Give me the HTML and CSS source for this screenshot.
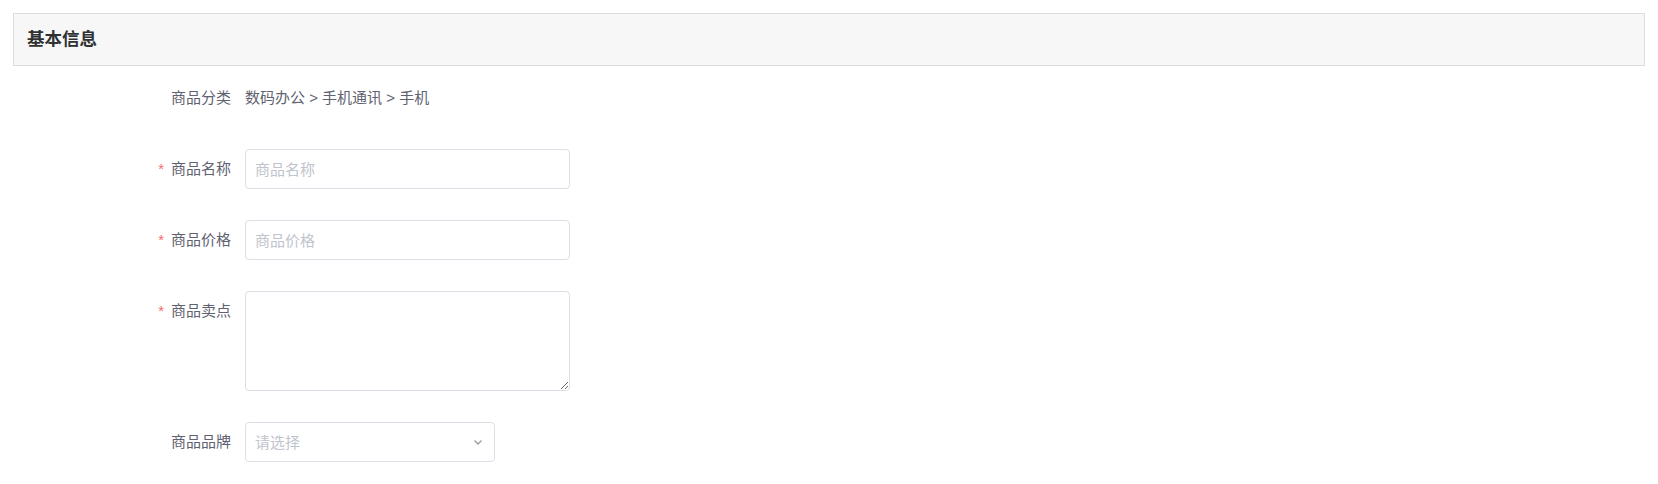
FILE: index.html
```html
<!DOCTYPE html>
<html>
<head>
    <meta charset="utf-8">
    <title>商品信息</title>
    <link rel="stylesheet" href="styles.css">
</head>
<body>
<div class="page">
    <div class="section-title">基本信息</div>

    <form class="goods-form">
        <div class="form-item">
            <label class="form-label">商品分类</label>
            <div class="form-content">
                <span class="form-text">数码办公 &gt; 手机通讯 &gt; 手机</span>
            </div>
        </div>
        <div class="form-item">
            <label class="form-label is-required" for="goods-name">商品名称</label>
            <div class="form-content">
                <input type="text" id="goods-name" class="form-input" placeholder="商品名称">
            </div>
        </div>
        <div class="form-item">
            <label class="form-label is-required" for="goods-price">商品价格</label>
            <div class="form-content">
                <input type="text" id="goods-price" class="form-input" placeholder="商品价格">
            </div>
        </div>
        <div class="form-item">
            <label class="form-label is-required" for="goods-point">商品卖点</label>
            <div class="form-content">
                <textarea id="goods-point" class="form-textarea"></textarea>
            </div>
        </div>
        <div class="form-item">
            <label class="form-label" for="goods-brand">商品品牌</label>
            <div class="form-content">
                <div class="form-select">
                    <input type="text" id="goods-brand" class="form-input select-input" placeholder="请选择" readonly>
                    <svg class="select-arrow" width="12" height="12" viewBox="0 0 12 12">
                        <path d="M2.5 4.5 L6 8 L9.5 4.5" fill="none" stroke="#9a9ca3" stroke-width="1.4"/>
                    </svg>
                </div>
            </div>
        </div>
    </form>
</div>
</body>
</html>
```

FILE: styles.css
```css
body {
    margin: 0;
    font-family: "Liberation Sans", "Noto Sans CJK SC", sans-serif;
    font-size: 15px;
    color: #606266;
    background-color: #fff;
}

.page {
    padding: 13px;
}

.section-title {
    height: 51px;
    line-height: 51px;
    padding-left: 13px;
    border: 1px solid #dcdcdc;
    background-color: #f7f7f7;
    color: #303133;
    font-size: 17.5px;
    font-weight: bold;
}

.goods-form {
    margin-top: 12px;
}

.form-item {
    display: flex;
    margin-bottom: 31px;
}

.form-label {
    width: 232px;
    padding-right: 14px;
    box-sizing: border-box;
    text-align: right;
    line-height: 40px;
    color: #5f6270;
}

.form-label.is-required::before {
    content: "*";
    color: #f56c6c;
    margin-right: 7px;
}

.form-content {
    line-height: 40px;
}

.form-text {
    color: #5f6270;
}

.form-input,
.form-textarea {
    width: 325px;
    height: 40px;
    padding: 0 9px;
    border: 1px solid #dcdfe6;
    border-radius: 4px;
    box-sizing: border-box;
    font-family: inherit;
    font-size: 15px;
    color: #606266;
    outline: none;
    display: block;
}

.form-input::placeholder {
    color: #c0c4cc;
}

.form-textarea {
    height: 100px;
    padding: 5px 9px;
    resize: vertical;
}

.form-select {
    position: relative;
    width: 250px;
}

.select-input {
    width: 250px;
    cursor: pointer;
}

.select-arrow {
    position: absolute;
    right: 11px;
    top: 14px;
}
```
